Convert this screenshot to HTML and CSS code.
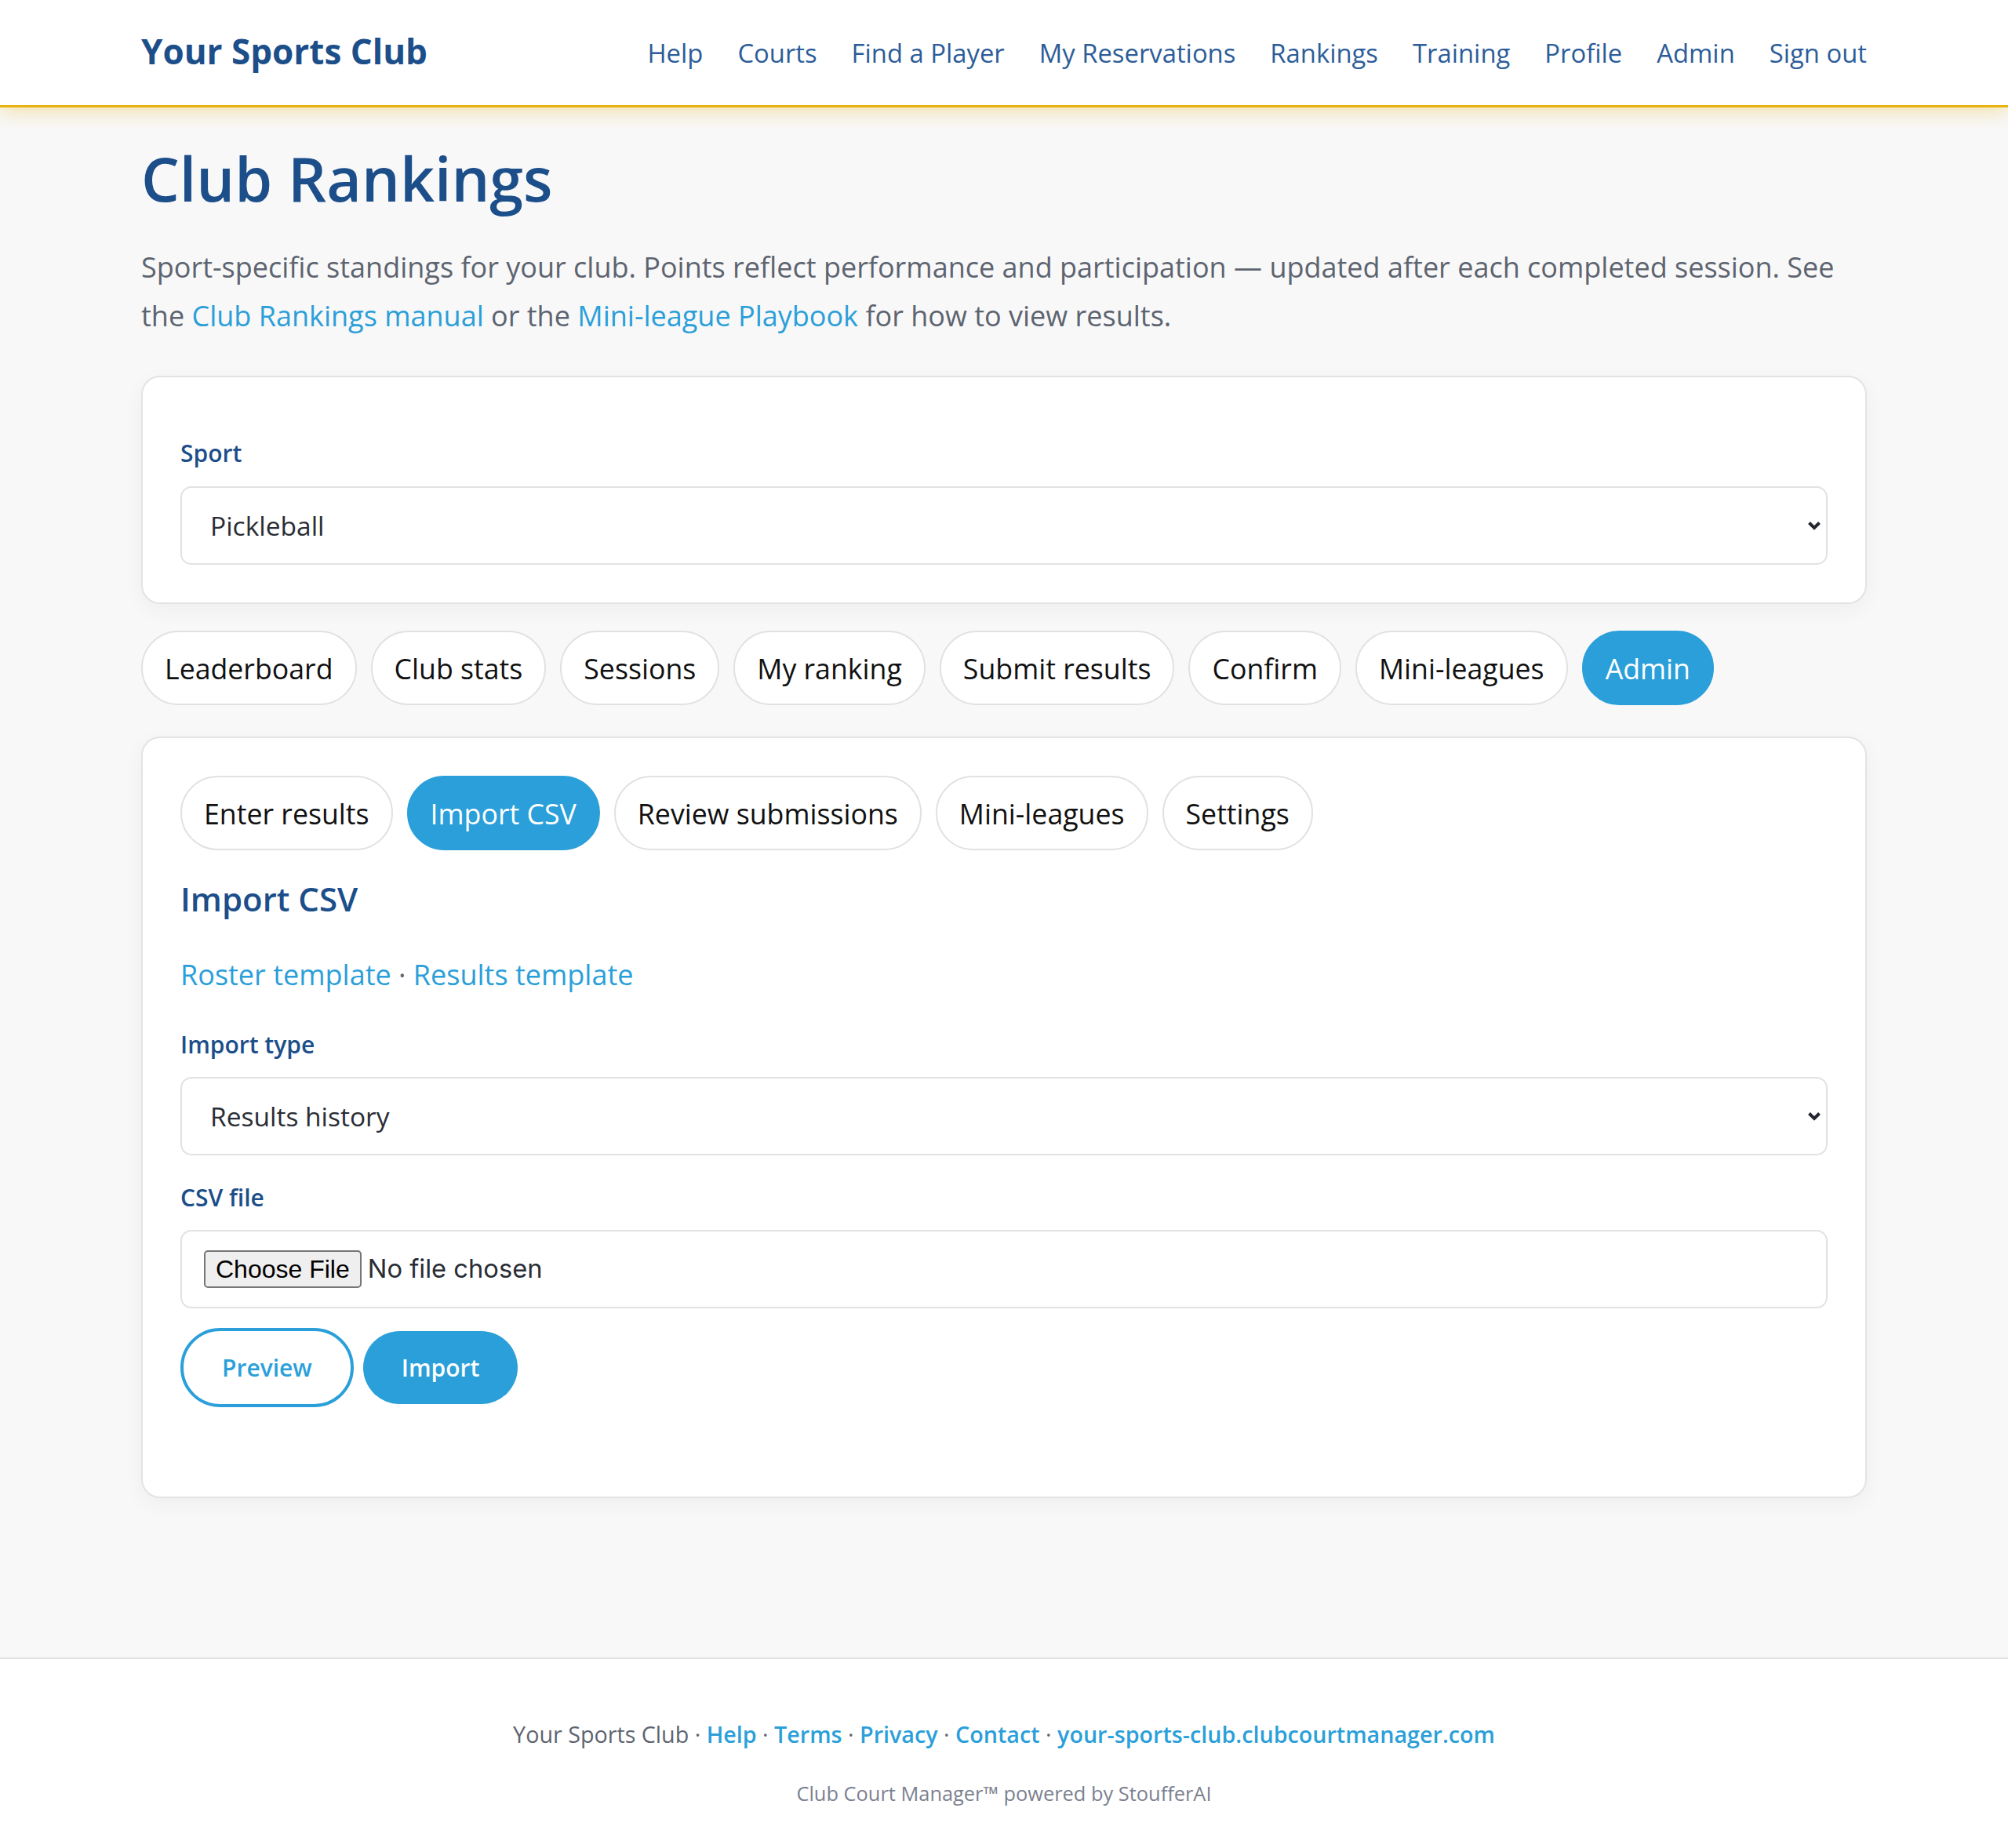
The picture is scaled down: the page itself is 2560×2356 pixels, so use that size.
FILE: index.html
```html
<!DOCTYPE html>
<html lang="en">
<head>
<meta charset="utf-8">
<title>Club Rankings · Your Sports Club</title>
<link rel="stylesheet" href="styles.css">
</head>
<body>
<header class="site-header">
  <div class="wrap header-inner">
    <a class="brand" href="#">Your Sports Club</a>
    <nav class="main-nav">
      <a href="#">Help</a>
      <a href="#">Courts</a>
      <a href="#">Find a Player</a>
      <a href="#">My Reservations</a>
      <a href="#">Rankings</a>
      <a href="#">Training</a>
      <a href="#">Profile</a>
      <a href="#">Admin</a>
      <a href="#">Sign out</a>
    </nav>
  </div>
</header>

<main class="wrap page">
  <h1 class="page-title">Club Rankings</h1>
  <p class="intro">Sport-specific standings for your club. Points reflect performance and participation — updated after each completed session. See<br>the <a href="#">Club Rankings manual</a> or the <a href="#">Mini-league Playbook</a> for how to view results.</p>

  <section class="card card-sport">
    <label class="field-label" for="sport">Sport</label>
    <div class="select-wrap">
      <select id="sport">
        <option>Pickleball</option>
        <option>Tennis</option>
        <option>Padel</option>
      </select>
      <svg class="chev" width="18" height="12" viewBox="0 0 18 12" aria-hidden="true"><polyline points="2.5,2.5 9,9 15.5,2.5" fill="none" stroke="#23262d" stroke-width="4"/></svg>
    </div>
  </section>

  <nav class="pill-row tabs">
    <a class="pill" href="#">Leaderboard</a>
    <a class="pill" href="#">Club stats</a>
    <a class="pill" href="#">Sessions</a>
    <a class="pill" href="#">My ranking</a>
    <a class="pill" href="#">Submit results</a>
    <a class="pill" href="#">Confirm</a>
    <a class="pill" href="#">Mini-leagues</a>
    <a class="pill is-active" href="#">Admin</a>
  </nav>

  <section class="card card-admin">
    <div class="pill-row">
      <a class="pill" href="#">Enter results</a>
      <a class="pill is-active" href="#">Import CSV</a>
      <a class="pill" href="#">Review submissions</a>
      <a class="pill" href="#">Mini-leagues</a>
      <a class="pill" href="#">Settings</a>
    </div>

    <h2 class="section-title">Import CSV</h2>
    <p class="template-links"><a href="#">Roster template</a><span class="sep"> · </span><a href="#">Results template</a></p>

    <form class="import-form">
      <div class="field">
        <label class="field-label" for="import-type">Import type</label>
        <div class="select-wrap">
          <select id="import-type">
            <option>Results history</option>
            <option>Roster</option>
          </select>
          <svg class="chev" width="18" height="12" viewBox="0 0 18 12" aria-hidden="true"><polyline points="2.5,2.5 9,9 15.5,2.5" fill="none" stroke="#23262d" stroke-width="4"/></svg>
        </div>
      </div>
      <div class="field">
        <label class="field-label" for="csv-file">CSV file</label>
        <div class="file-box"><input id="csv-file" type="file" accept=".csv"></div>
      </div>
      <div class="actions">
        <button type="button" class="btn btn-outline">Preview</button>
        <button type="submit" class="btn btn-solid">Import</button>
      </div>
    </form>
  </section>
</main>

<footer class="site-footer">
  <p class="footer-links">Your Sports Club<span class="sep"> · </span><a href="#">Help</a><span class="sep"> · </span><a href="#">Terms</a><span class="sep"> · </span><a href="#">Privacy</a><span class="sep"> · </span><a href="#">Contact</a><span class="sep"> · </span><a href="#">your-sports-club.clubcourtmanager.com</a></p>
  <p class="footer-credit">Club Court Manager™ powered by StoufferAI</p>
</footer>
</body>
</html>
```

FILE: styles.css
```css
html, body {
  margin: 0;
  padding: 0;
}

html {
  background: #fff;
}

body {
  background: #f8f8f8;
  font-family: "Open Sans", "Noto Sans", sans-serif;
  color: #2a2d35;
}

a {
  text-decoration: none;
}

.wrap {
  width: 2200px;
  margin: 0 auto;
}

/* ---------- header ---------- */
.site-header {
  position: relative;
  z-index: 1;
  background: #fff;
  border-bottom: 3px solid #e9b20f;
  box-shadow: 0 6px 22px rgba(233, 178, 15, 0.32);
}

.header-inner {
  height: 134px;
  display: flex;
  align-items: center;
  justify-content: space-between;
}

.brand {
  margin-top: -4px;
  font-size: 44px;
  font-weight: 700;
  color: #1c4e8a;
}

.main-nav {
  display: flex;
  gap: 44px;
}

.main-nav a {
  font-size: 32.8px;
  font-weight: 500;
  color: #2c5d99;
}

/* ---------- page ---------- */
.page {
  padding: 45px 0 203px;
}

.page-title {
  margin: 0;
  font-size: 77px;
  line-height: 91px;
  font-weight: 600;
  color: #1c4e8a;
}

.intro {
  margin: 37px 0 45px;
  font-size: 36px;
  line-height: 62px;
  color: #5d6470;
}

.intro a,
.template-links a {
  color: #2b9fd9;
}

/* ---------- cards ---------- */
.card {
  background: #fff;
  border: 2px solid #e3e3e3;
  border-radius: 24px;
  box-shadow: 0 8px 28px rgba(0, 0, 0, 0.045);
  padding: 48px;
}

.card-sport {
  padding-top: 76px;
  margin-bottom: 34px;
}

.card-admin {
  padding-bottom: 114px;
}

/* ---------- form fields ---------- */
.field-label {
  display: block;
  margin-bottom: 21px;
  font-size: 30px;
  line-height: 42px;
  font-weight: 600;
  color: #1c4e8a;
}

.import-form .field-label {
  margin-bottom: 20px;
}

.field + .field {
  margin-top: 33px;
}

.select-wrap {
  position: relative;
}

.select-wrap select {
  display: block;
  width: 100%;
  height: 100px;
  box-sizing: border-box;
  -webkit-appearance: none;
  appearance: none;
  background: #fff;
  border: 2px solid #e2e2e2;
  border-radius: 14px;
  padding: 0 60px 0 36px;
  font-family: "Open Sans", "Noto Sans", sans-serif;
  font-size: 33.5px;
  color: #2a2d35;
}

.chev {
  position: absolute;
  right: 8px;
  top: 50%;
  transform: translateY(-50%);
  pointer-events: none;
}

.file-box {
  height: 100px;
  box-sizing: border-box;
  display: flex;
  align-items: center;
  padding: 0 28px;
  background: #fff;
  border: 2px solid #e2e2e2;
  border-radius: 14px;
}

.file-box input {
  font-family: Inter, "Liberation Sans", sans-serif;
  font-size: 32.7px;
  color: #2a2d35;
}

.file-box input::file-selector-button {
  font-family: "Liberation Sans", Arial, sans-serif;
  font-size: 32px;
  color: #000;
  height: 48px;
  padding: 0 13px;
  margin-right: 8px;
  background: #efefef;
  border: 2px solid #767676;
  border-radius: 5px;
}

/* ---------- pills ---------- */
.pill-row {
  display: flex;
  flex-wrap: wrap;
  gap: 18px;
}

.tabs {
  margin-bottom: 40px;
}

.pill {
  display: inline-flex;
  align-items: center;
  box-sizing: border-box;
  height: 95px;
  padding: 0 28px;
  background: #fff;
  border: 2px solid #e1e1e1;
  border-radius: 999px;
  font-size: 35.7px;
  color: #111;
}

.pill.is-active {
  background: #2b9fd9;
  border-color: #2b9fd9;
  color: #fff;
}

/* ---------- import section ---------- */
.section-title {
  margin: 38px 0 0;
  font-size: 42px;
  line-height: 48px;
  font-weight: 600;
  color: #1c4e8a;
}

.template-links {
  margin: 45px 0 40px;
  font-size: 36px;
  line-height: 56px;
}

.template-links .sep {
  color: #5d6470;
}

.import-form {
  margin: 0;
}

.actions {
  display: flex;
  align-items: center;
  gap: 12px;
  margin-top: 25px;
}

.btn {
  box-sizing: border-box;
  height: 93px;
  padding: 0 49px;
  border-radius: 999px;
  font-family: "Open Sans", "Noto Sans", sans-serif;
  font-size: 30px;
  font-weight: 600;
  cursor: pointer;
}

.btn-outline {
  height: 101px;
  background: #fff;
  border: 4px solid #2b9fd9;
  color: #2b9fd9;
}

.btn-solid {
  background: #2b9fd9;
  border: 0;
  color: #fff;
}

/* ---------- footer ---------- */
.site-footer {
  background: #fff;
  border-top: 2px solid #e3e3e3;
  padding: 75px 0 52px;
  text-align: center;
}

.footer-links {
  margin: 0;
  font-size: 28.7px;
  line-height: 42px;
  color: #5d6470;
}

.footer-links a {
  color: #2b9fd9;
  font-weight: 600;
}

.footer-credit {
  margin: 36px 0 0;
  font-size: 25.4px;
  line-height: 36px;
  color: #7b8190;
}
```
